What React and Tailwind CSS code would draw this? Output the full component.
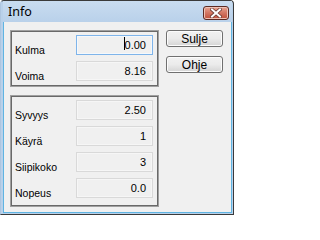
import React from "react";

function Field({ value, focused, caret }) {
  return (
    <div
      className={
        "relative w-[77px] h-[20px] flex items-center justify-end pr-[6px] text-[11px] leading-[12px] text-black " +
        (focused
          ? "border border-[#7eb4ea] bg-[#f0f0f0] shadow-[inset_0_0_0_1px_#f4f8fc]"
          : "border border-[#d9d9d9] bg-[#f0f0f0] shadow-[inset_0_0_0_1px_#f6f6f6]")
      }
    >
      <span className="relative">
        {caret && <span className="absolute left-[-1px] top-[-2px] w-[1px] h-[13px] bg-black" />}
        {value}
      </span>
    </div>
  );
}

function Row({ label, value, focused, caret }) {
  return (
    <div className="flex justify-between items-start h-[20px]">
      <span className="mt-[9px] text-[10.5px] leading-[12px] text-black">{label}</span>
      <Field value={value} focused={focused} caret={caret} />
    </div>
  );
}

function Group({ children, h }) {
  return (
    <div
      className={
        "w-[149px] border border-[#a0a0a0] shadow-[inset_1px_1px_0_#696969,inset_-1px_-1px_0_#696969] pl-[4px] pr-[5px] pt-[4px] flex flex-col gap-[6px] " +
        h
      }
    >
      {children}
    </div>
  );
}

function Button({ children }) {
  return (
    <div className="w-[57px] h-[17px] rounded-[3px] border border-[#707070] bg-gradient-to-b from-[#f2f2f2] via-[#ebebeb] to-[#d4d4d4] shadow-[inset_0_0_0_1px_#fcfcfc] flex items-center justify-center text-[12px] leading-[12px] text-black">
      {children}
    </div>
  );
}

export default function App() {
  return (
    <div
      className="w-[234px] h-[215px] flex flex-col border-t border-r border-b border-l border-t-[#3a3a3a] border-r-[#3a3a3a] border-b-[#3a3a3a] border-l-[#aec6e0] rounded-tl-[4px] rounded-tr-[4px] bg-[#b9d1ea] pl-[2px] pr-[1px] pb-[1px]"
      style={{ fontFamily: '"Liberation Sans", Arial, sans-serif' }}
    >
      <div className="h-[21px] flex items-center justify-between pl-[5px] pr-[3px] bg-gradient-to-b from-[#c9dcf0] to-[#b9d1ea]">
        <span className="text-[12.5px] leading-[14px] text-black mt-[1px]" style={{ fontFamily: '"Noto Sans", "Open Sans", sans-serif' }}>
          Info
        </span>
        <div className="w-[26px] h-[14px] mt-[2px] rounded-[3px] border border-[#5b2a22] bg-gradient-to-b from-[#e8a593] via-[#d27562] to-[#c0503b] shadow-[inset_0_0_0_1px_#eec2b6] flex items-center justify-center">
          <svg width="12" height="10" viewBox="0 0 12 10">
            <path d="M2 1.5 L10 8.5 M10 1.5 L2 8.5" stroke="#6b3a33" strokeWidth="3.6" strokeLinecap="square" />
            <path d="M2 1.5 L10 8.5 M10 1.5 L2 8.5" stroke="#ffffff" strokeWidth="2" strokeLinecap="square" />
          </svg>
        </div>
      </div>
      <div className="flex-1 bg-[#f0f0f0] border-l border-r border-b border-[#5fb4e2] flex pl-[6px] pt-[8px] gap-[7px]">
        <div className="flex flex-col gap-[8px]">
          <Group h="h-[57px]">
            <Row label="Kulma" value="0.00" focused caret />
            <Row label="Voima" value="8.16" />
          </Group>
          <Group h="h-[112px]">
            <Row label="Syvyys" value="2.50" />
            <Row label="Käyrä" value="1" />
            <Row label="Siipikoko" value="3" />
            <Row label="Nopeus" value="0.0" />
          </Group>
        </div>
        <div className="flex flex-col gap-[9px]">
          <Button>Sulje</Button>
          <Button>Ohje</Button>
        </div>
      </div>
    </div>
  );
}
